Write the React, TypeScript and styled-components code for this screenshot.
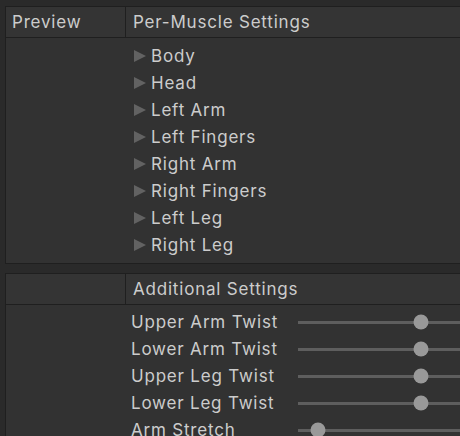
import React from "react";
import styled, { createGlobalStyle } from "styled-components";

const Global = createGlobalStyle`
  html, body { margin: 0; padding: 0; background: #2a2a2a; overflow: hidden; }
  body { font-family: Inter, "Noto Sans", sans-serif; }
`;

const Page = styled.div`
  width: 460px;
  height: 436px;
  padding: 6px 0 0 5px;
  box-sizing: border-box;
  display: flex;
  flex-direction: column;
  gap: 9px;
  overflow: hidden;
`;

const Panel = styled.section`
  width: 480px;
  flex-shrink: 0;
  background: #323232;
  border: 1px solid #1f1f1f;
  box-sizing: border-box;
`;

const Header = styled.div`
  display: flex;
  height: 30px;
  border-bottom: 1px solid #1f1f1f;
  background: #343434;
`;

const HeaderCell = styled.div<{ $w?: number; $pad: number }>`
  ${(p) => (p.$w ? `width: ${p.$w}px; flex-shrink: 0; border-right: 1px solid #1f1f1f;` : "flex: 1;")}
  padding-left: ${(p) => p.$pad}px;
  box-sizing: border-box;
  display: flex;
  align-items: center;
  color: #cccccc;
  font-size: 17px;
  letter-spacing: 0.8px;
`;

const Body = styled.div<{ $left: number; $top: number; $bottom: number }>`
  padding: ${(p) => p.$top}px 0 ${(p) => p.$bottom}px ${(p) => p.$left}px;
  display: flex;
  flex-direction: column;
`;

const FoldRow = styled.div`
  height: 27px;
  display: flex;
  align-items: center;
  gap: 5px;
  color: #cccccc;
  font-size: 17px;
  letter-spacing: 0.8px;
`;

const Arrow = styled.span`
  width: 0;
  height: 0;
  border-top: 6px solid transparent;
  border-bottom: 6px solid transparent;
  border-left: 12px solid #626262;
  margin-top: 1px;
`;

const SliderRow = styled.div`
  height: 27px;
  display: flex;
  align-items: center;
  color: #cccccc;
  font-size: 17px;
  letter-spacing: 0.8px;
`;

const Label = styled.span`
  width: 167px;
  flex-shrink: 0;
  white-space: nowrap;
`;

const Track = styled.div`
  position: relative;
  flex: 1;
  height: 3px;
  background: #5e5e5e;
  margin-top: 1px;
`;

const Knob = styled.div`
  position: absolute;
  top: 50%;
  width: 15px;
  height: 15px;
  border-radius: 50%;
  background: #999999;
  transform: translate(-50%, -50%);
`;

const muscles = ["Body", "Head", "Left Arm", "Left Fingers", "Right Arm", "Right Fingers", "Left Leg", "Right Leg"];
const sliders: [string, number][] = [
  ["Upper Arm Twist", 123],
  ["Lower Arm Twist", 123],
  ["Upper Leg Twist", 123],
  ["Lower Leg Twist", 123],
  ["Arm Stretch", 20],
];

export default function App() {
  return (
    <>
      <Global />
      <Page>
        <Panel>
          <Header>
            <HeaderCell $w={120} $pad={6}>Preview</HeaderCell>
            <HeaderCell $pad={7}>Per-Muscle Settings</HeaderCell>
          </Header>
          <Body $left={128} $top={4} $bottom={5}>
            {muscles.map((m) => (
              <FoldRow key={m}>
                <Arrow />
                {m}
              </FoldRow>
            ))}
          </Body>
        </Panel>
        <Panel>
          <Header>
            <HeaderCell $w={120} $pad={6}></HeaderCell>
            <HeaderCell $pad={7}>Additional Settings</HeaderCell>
          </Header>
          <Body $left={125} $top={3} $bottom={5}>
            {sliders.map(([l, v]) => (
              <SliderRow key={l}>
                <Label>{l}</Label>
                <Track>
                  <Knob style={{ left: `${v}px` }} />
                </Track>
              </SliderRow>
            ))}
          </Body>
        </Panel>
      </Page>
    </>
  );
}
